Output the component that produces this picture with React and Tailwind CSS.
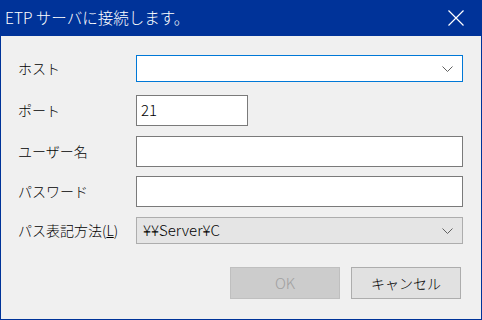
const Chevron = ({ color = '#606060' }) => (
    <svg width="11" height="6" viewBox="0 0 11 6" className="shrink-0">
        <path d="M0.5 0.5 L5.5 5.5 L10.5 0.5" fill="none" stroke={color} strokeWidth="1" />
    </svg>
);

const Row = ({ label, className, children }) => (
    <div className={`flex items-center ${className}`}>
        <div className="w-[118px] text-[14px] text-black">{label}</div>
        {children}
    </div>
);

const App = () => {
    return (
        <div
            className="w-[482px] h-[320px] flex flex-col bg-[#003399] px-px pb-px font-light"
            style={{ fontFamily: '"Noto Sans CJK JP", "Noto Sans", sans-serif' }}
        >
            {/* Title bar */}
            <div className="h-[36px] shrink-0 flex items-center justify-between text-white">
                <span className="pl-[4px] text-[15.5px]">ETP サーバに接続します。</span>
                <svg width="16" height="16" viewBox="0 0 16 16" className="mr-[17px]">
                    <path d="M0.5 0.5 L15.5 15.5 M15.5 0.5 L0.5 15.5" stroke="#ffffff" strokeWidth="1.2" />
                </svg>
            </div>

            {/* Body */}
            <div className="flex-1 bg-[#f0f0f0] pl-[17px] pr-[18px] flex flex-col">
                <Row label="ホスト" className="mt-[19px] h-[27px]">
                    <div className="flex-1 h-full bg-white border border-[#0078d7] flex items-center justify-end pr-[9px]">
                        <Chevron />
                    </div>
                </Row>

                <Row label="ポート" className="mt-[13px] h-[31px]">
                    <div className="w-[112px] h-full bg-white border border-[#7a7a7a] flex items-center pl-[4px] text-[15px] text-black">
                        21
                    </div>
                </Row>

                <Row label="ユーザー名" className="mt-[10px] h-[31px]">
                    <div className="flex-1 h-full bg-white border border-[#7a7a7a]" />
                </Row>

                <Row label="パスワード" className="mt-[9px] h-[31px]">
                    <div className="flex-1 h-full bg-white border border-[#7a7a7a]" />
                </Row>

                <Row label={<span>パス表記方法(<span className="underline">L</span>)</span>} className="mt-[10px] h-[27px]">
                    <div className="flex-1 h-full bg-[#e5e5e5] border border-[#adadad] flex items-center justify-between pl-[6px] pr-[9px] text-[15px] text-black">
                        <span>¥¥Server¥C</span>
                        <Chevron />
                    </div>
                </Row>

                {/* Buttons */}
                <div className="mt-[23px] flex justify-end gap-[11px] pr-[2px]">
                    <button className="w-[110px] h-[32px] bg-[#cccccc] border border-[#bfbfbf] text-[15px] text-[#a0a0a0]">
                        OK
                    </button>
                    <button className="w-[110px] h-[32px] bg-[#e1e1e1] border border-[#adadad] text-[14px] text-black">
                        キャンセル
                    </button>
                </div>
            </div>
        </div>
    );
};

export default App;
